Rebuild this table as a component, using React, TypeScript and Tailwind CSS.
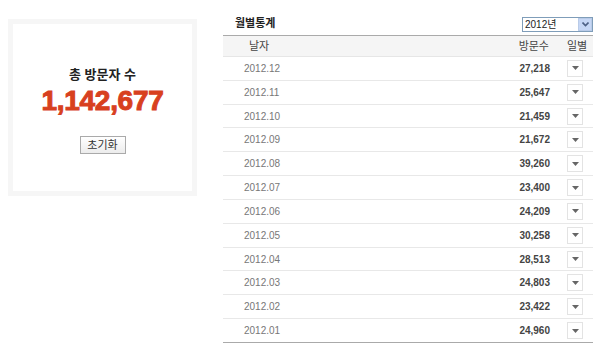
import React from "react";

const rows: [string, string][] = [
  ["2012.12", "27,218"],
  ["2012.11", "25,647"],
  ["2012.10", "21,459"],
  ["2012.09", "21,672"],
  ["2012.08", "39,260"],
  ["2012.07", "23,400"],
  ["2012.06", "24,209"],
  ["2012.05", "30,258"],
  ["2012.04", "28,513"],
  ["2012.03", "24,803"],
  ["2012.02", "23,422"],
  ["2012.01", "24,960"],
];

const font = { fontFamily: '"Liberation Sans", "Noto Sans CJK KR", sans-serif' };

function DayButton() {
  return (
    <div className="flex h-[17px] w-[16px] items-center justify-center border border-[#e3e3e3] bg-white">
      <svg width="7" height="4" viewBox="0 0 7 4">
        <path d="M0 0h7L3.5 4z" fill="#666" />
      </svg>
    </div>
  );
}

export default function App() {
  return (
    <div className="flex h-[348px] w-[600px] bg-white" style={font}>
      {/* Total */}
      <div className="ml-[8px] mt-[19px] h-[177px] w-[189px] border-[5px] border-[#f6f6f6] bg-white">
        <div className="flex flex-col items-center pt-[43px]">
          <div className="text-[13px] font-bold leading-[16px] text-[#222]">총 방문자 수</div>
          <div className="mt-[3px] text-[28px] font-bold leading-[30px] tracking-[-0.3px] text-[#d8401f] [-webkit-text-stroke:1px_#d8401f]">
            1,142,677
          </div>
          <button className="mt-[20px] h-[18px] w-[46px] border border-[#aaa] bg-gradient-to-b from-white to-[#ececec] text-[11px] leading-[16px] text-[#333]">
            초기화
          </button>
        </div>
      </div>

      {/* Monthly */}
      <div className="ml-[26px] mt-[17px] flex w-[370px] flex-col">
        <div className="flex h-[18px] items-start justify-between">
          <div className="ml-[12px] mt-[-1px] text-[11px] font-bold leading-[14px] text-[#222]">월별통계</div>
          <div className="flex h-[15px] w-[71px] items-center border border-[#7f9db9] bg-white">
            <span className="flex-1 pl-[2px] text-[10px] leading-[13px] text-[#222]">2012년</span>
            <div className="flex h-[13px] w-[14px] items-center justify-center border border-[#b9cbe8] bg-[#c6d7f5]">
              <svg width="7" height="5" viewBox="0 0 7 5">
                <path d="M0.5 0.5L3.5 3.5L6.5 0.5" stroke="#4d6185" strokeWidth="1.6" fill="none" />
              </svg>
            </div>
          </div>
        </div>
        <div className="flex h-[22px] items-center border-t border-b border-t-[#aaa] border-b-[#e6e6e6] bg-[#f5f5f5] text-[11px] text-[#444]">
          <span className="ml-[26px] flex-1">날자</span>
          <span className="w-[44px] text-right">방문수</span>
          <span className="ml-[18px] w-[26px]">일별</span>
        </div>
        {rows.map(([d, v], i) => (
          <div
            key={d}
            className={
              "flex h-[23.83px] items-center border-b text-[10px] " +
              (i === rows.length - 1 ? "border-b-[#aaa]" : "border-b-[#e8e8e8]")
            }
          >
            <span className="ml-[21px] flex-1 text-[#777]">{d}</span>
            <span className="w-[60px] text-right font-bold text-[#444]">{v}</span>
            <span className="ml-[17px] w-[26px]">
              <DayButton />
            </span>
          </div>
        ))}
      </div>
    </div>
  );
}
